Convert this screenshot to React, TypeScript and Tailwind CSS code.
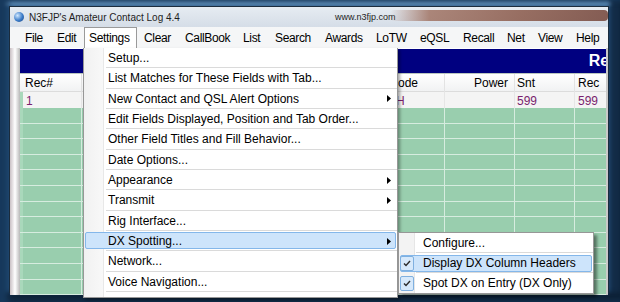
const menuBar = [
  { label: "File", w: "w-[32px]" },
  { label: "Edit", w: "w-[32px]" },
  { label: "Settings", w: "w-[55px]", open: true },
  { label: "Clear", w: "w-[41px]" },
  { label: "CallBook", w: "w-[58px]" },
  { label: "List", w: "w-[32px]" },
  { label: "Search", w: "w-[50px]" },
  { label: "Awards", w: "w-[51px]" },
  { label: "LoTW", w: "w-[44px]" },
  { label: "eQSL", w: "w-[43px]" },
  { label: "Recall", w: "w-[44px]" },
  { label: "Net", w: "w-[31px]" },
  { label: "View", w: "w-[38px]" },
  { label: "Help", w: "w-[30px]" },
];

const settingsItems = [
  { label: "Setup..." },
  { label: "List Matches for These Fields with Tab..." },
  { label: "New Contact and QSL Alert Options", sub: true },
  { label: "Edit Fields Displayed, Position and Tab Order..." },
  { label: "Other Field Titles and Fill Behavior..." },
  { label: "Date Options..." },
  { label: "Appearance", sub: true },
  { label: "Transmit", sub: true },
  { label: "Rig Interface..." },
  { label: "DX Spotting...", sub: true, active: true },
  { label: "Network..." },
  { label: "Voice Navigation..." },
];

const dxItems = [
  { label: "Configure...", checked: false },
  { label: "Display DX Column Headers", checked: true, active: true },
  { label: "Spot DX on Entry (DX Only)", checked: true },
];

const cols = "grid grid-cols-[62px_1fr_62px_70px_60px_31px]";

function Arrow() {
  return (
    <svg width="4" height="7" viewBox="0 0 4 7" className="shrink-0">
      <path d="M0 0 L4 3.5 L0 7 Z" fill="#000" />
    </svg>
  );
}

function Check() {
  return (
    <svg width="8" height="7" viewBox="0 0 8 7">
      <path d="M1 3.5 L3 5.5 L7 1" stroke="#2b2b2b" strokeWidth="1.4" fill="none" />
    </svg>
  );
}

export default function App() {
  const greenRows = Array.from({ length: 12 });

  return (
    <div className="w-[620px] h-[302px] overflow-hidden relative bg-[#234d78] font-['Liberation_Sans',Arial,sans-serif] pt-[7px] pl-[10px] pr-[12px] pb-[10px] shadow-[inset_8px_0_6px_#17395c,inset_0_-10px_4px_#0e2238,inset_-10px_0_4px_#132c47,inset_0_6px_3px_#5a89b5]">
      <div className="w-full h-full flex flex-col bg-[#eef1f4] relative shadow-[0_0_0_1px_#1b2c3d]">
        {/* title bar */}
        <div className="h-[20px] shrink-0 flex items-center bg-[linear-gradient(to_bottom,#e6ecf2,#d5dde7)] relative overflow-hidden">
          <div className="w-[10px] h-[10px] rounded-full ml-[4px] bg-[radial-gradient(circle_at_35%_35%,#cfe8ff,#3a7bc8_55%,#1b3f78)]" />
          <span className="ml-[5px] text-[10px] text-[#1e1e1e]">N3FJP's Amateur Contact Log 4.4</span>
          <span className="absolute left-[325px] top-[4px] text-[9px] text-[#1e1e1e]">www.n3fjp.com</span>
          {/* blurred caption buttons */}
          <div className="absolute left-[380px] top-[3px] w-[218px] h-[11px] rounded-[4px] opacity-80 bg-[linear-gradient(to_right,rgba(160,120,105,0),#9d6d5c_18%,#85503f_60%,#6d3a2d)]" />
        </div>

        {/* menu bar */}
        <div className="h-[21px] shrink-0 flex items-stretch bg-[#f5f6f7] pl-[11px] text-[12px] tracking-[-0.35px] text-black">
          {menuBar.map((m) =>
            m.open ? (
              <div key={m.label} className={`${m.w} flex items-stretch`}>
                <div className="w-[53px] -ml-[1px] flex items-center pl-[4px] bg-white border border-b-0 border-[#9a9a9a]">{m.label}</div>
              </div>
            ) : (
              <div key={m.label} className={`${m.w} flex items-center pl-[4px] whitespace-nowrap`}>
                {m.label}
              </div>
            )
          )}
        </div>

        {/* body */}
        <div className="flex-1 flex bg-white">
          <div className="w-[10px] shrink-0 bg-[linear-gradient(to_right,#c9c0c4,#ffffff_50%,#b8b8b8)]" />
          <div className="flex-1 flex flex-col pt-[1px]">
            <div className="h-[24px] shrink-0 bg-[#000080] flex items-center justify-end overflow-hidden">
              <span className="text-white font-bold text-[16px] mr-[-12px]">Rec</span>
            </div>
            <div className="flex-1 flex flex-col bg-[#99ceae] border-t border-[#b9c6bf] text-[12px]">
              {/* header */}
              <div className={`h-[18px] shrink-0 ${cols} bg-[linear-gradient(to_bottom,#ffffff,#f1f2f3)] border-b border-[#dcdcdc]`}>
                <div className="pl-[5px] flex items-center border-r border-[#e3e3e3]">Rec#</div>
                <div className="border-r border-[#e3e3e3]" />
                <div className="pl-[5px] flex items-center border-r border-[#e3e3e3]">Mode</div>
                <div className="pr-[6px] flex items-center justify-end border-r border-[#e3e3e3]">Power</div>
                <div className="pl-[2px] flex items-center border-r border-[#e3e3e3]">Snt</div>
                <div className="pl-[3px] flex items-center">Rec</div>
              </div>
              {/* first row */}
              <div className={`h-[16px] shrink-0 ${cols} bg-[#f4f4f4] text-[#7a1f6e]`}>
                <div className="pl-[3px] flex items-center border-r border-[#e6e6e6] border-l-[3px] border-l-[#a9d8bb]">1</div>
                <div className="border-r border-[#e6e6e6]" />
                <div className="pl-[5px] flex items-center border-r border-[#e6e6e6]">PH</div>
                <div className="border-r border-[#e6e6e6]" />
                <div className="pl-[2px] flex items-center border-r border-[#e6e6e6]">599</div>
                <div className="pl-[3px] flex items-center">599</div>
              </div>
              {greenRows.map((_, i) => (
                <div key={i} className={`h-[15.6px] shrink-0 ${cols} border-b border-[#d6ecdf]`}>
                  <div className="border-r border-[#d6ecdf] border-l-[3px] border-l-[#a9d8bb]" />
                  <div className="border-r border-[#d6ecdf]" />
                  <div className="border-r border-[#d6ecdf]" />
                  <div className="border-r border-[#d6ecdf]" />
                  <div className="border-r border-[#d6ecdf]" />
                  <div />
                </div>
              ))}
            </div>
          </div>
          <div className="w-[2px] shrink-0 bg-[#c9c9c9]" />
        </div>

        {/* Settings dropdown */}
        <div className="absolute left-[73px] top-[41px] w-[315px] h-[250px] bg-white border border-[#979797] border-t-0 shadow-[2px_2px_3px_rgba(0,0,0,0.35)] text-[12px] text-black">
          <div className="absolute left-0 top-0 bottom-0 w-[20px] bg-[linear-gradient(to_right,#f1f1f1,#f8f8f8)] border-r border-[#e8e8e8]" />
          {settingsItems.map((it) => (
            <div key={it.label} className="relative h-[20.33px]">
              {it.active && (
                <div className="absolute left-[1px] right-[1px] top-[1px] bottom-[2px] rounded-[2px] border border-[#84b7ea] bg-[#cde4fb]" />
              )}
              <div className="absolute left-[22px] right-0 bottom-0 h-px bg-[#dadada]" />
              <div className="relative h-full flex items-center pl-[24px] pr-[6px]">
                <span className="flex-1">{it.label}</span>
                {it.sub && <Arrow />}
              </div>
            </div>
          ))}
        </div>

        {/* DX Spotting submenu */}
        <div className="absolute left-[388px] top-[225px] w-[196px] h-[62px] bg-white border border-[#979797] shadow-[3px_3px_3px_rgba(0,0,0,0.45)] text-[12px] text-black">
          <div className="absolute left-0 top-0 bottom-0 w-[16px] bg-[#f3f3f3] border-r border-[#e6e6e6]" />
          {dxItems.map((it, i) => (
            <div key={it.label} className="relative h-[20px]">
              {it.active && (
                <div className="absolute left-[1px] right-[1px] top-[2px] bottom-[1px] rounded-[2px] border border-[#84b7ea] bg-[#cde4fb]" />
              )}
              {i < 2 && <div className="absolute left-[17px] right-0 bottom-0 h-px bg-[#dadada]" />}
              {it.checked && (
                <div className="absolute left-[1px] top-[3px] w-[14px] h-[15px] rounded-[2px] border border-[#7fb0e0] bg-[#d7e9fb] flex items-center justify-center">
                  <Check />
                </div>
              )}
              <div className="relative h-full flex items-center pl-[24px]">{it.label}</div>
            </div>
          ))}
        </div>
      </div>
    </div>
  );
}
